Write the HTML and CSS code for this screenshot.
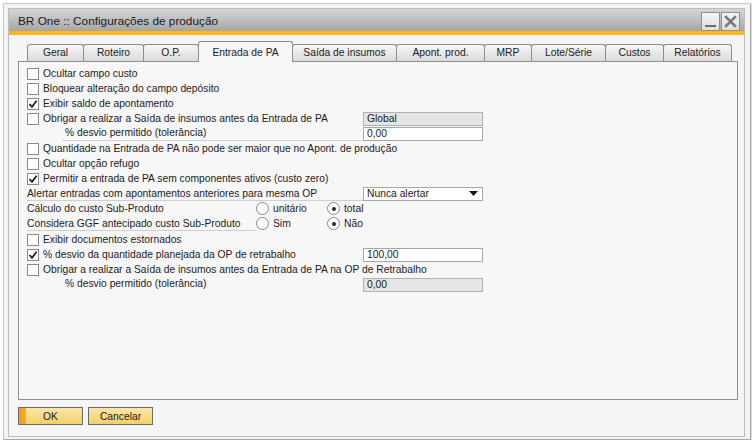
FILE: index.html
```html
<!DOCTYPE html>
<html lang="pt-BR">
<head>
<meta charset="utf-8">
<title>BR One :: Configurações de produção</title>
<link rel="stylesheet" href="styles.css">
</head>
<body>
<div class="window">
  <div class="frame">
    <div class="titlebar">
      <span class="title">BR One :: Configurações de produção</span>
      <div class="wbtns">
        <span class="wbtn"><svg width="17" height="17" viewBox="0 0 17 17"><rect x="3" y="12" width="11" height="2" fill="#6e6e6e"/></svg></span>
        <span class="wbtn"><svg width="17" height="17" viewBox="0 0 17 17"><path d="M4 4 L13 13 M13 4 L4 13" stroke="#7a7a7a" stroke-width="2.6" stroke-linecap="square"/></svg></span>
      </div>
    </div>
    <div class="accent"></div>
    <div class="client">
      <div class="tabs">
        <div class="tab w-geral">Geral</div>
        <div class="tab w-roteiro">Roteiro</div>
        <div class="tab w-op">O.P.</div>
        <div class="tab active w-entrada">Entrada de PA</div>
        <div class="tab w-saida">Saída de insumos</div>
        <div class="tab w-apont">Apont. prod.</div>
        <div class="tab w-mrp">MRP</div>
        <div class="tab w-lote">Lote/Série</div>
        <div class="tab w-custos">Custos</div>
        <div class="tab w-rel">Relatórios</div>
      </div>
      <div class="panel">
        <div class="row"><span class="cb"></span><span class="lbl">Ocultar campo custo</span></div>
        <div class="row"><span class="cb"></span><span class="lbl">Bloquear alteração do campo depósito</span></div>
        <div class="row"><span class="cb checked"><svg width="10" height="10" viewBox="0 0 10 10"><path d="M1.5 5 L4 7.8 L8.6 1.8" fill="none" stroke="#1a1a1a" stroke-width="1.7"/></svg></span><span class="lbl">Exibir saldo de apontamento</span></div>
        <div class="row"><div class="lcol"><span class="cb"></span><span class="lbl">Obrigar a realizar a Saída de insumos antes da Entrada de PA</span></div><span class="field ro">Global</span></div>
        <div class="row"><div class="lcol"><span class="sub">% desvio permitido (tolerância)</span></div><span class="field">0,00</span></div>
        <div class="row"><span class="cb"></span><span class="lbl">Quantidade na Entrada de PA não pode ser maior que no Apont. de produção</span></div>
        <div class="row"><span class="cb"></span><span class="lbl">Ocultar opção refugo</span></div>
        <div class="row"><span class="cb checked"><svg width="10" height="10" viewBox="0 0 10 10"><path d="M1.5 5 L4 7.8 L8.6 1.8" fill="none" stroke="#1a1a1a" stroke-width="1.7"/></svg></span><span class="lbl">Permitir a entrada de PA sem componentes ativos (custo zero)</span></div>
        <div class="row"><div class="lcol uline">Alertar entradas com apontamentos anteriores para mesma OP</div><span class="field select">Nunca alertar<svg class="caret" width="9" height="5" viewBox="0 0 9 5"><path d="M0 0 H9 L4.5 5 Z" fill="#1a1a1a"/></svg></span></div>
        <div class="row"><div class="rlabel">Cálculo do custo Sub-Produto</div><div class="ropt"><span class="rd"></span><span class="rtxt">unitário</span></div><div class="ropt"><span class="rd on"></span><span class="rtxt">total</span></div></div>
        <div class="row"><div class="rlabel uline">Considera GGF antecipado custo Sub-Produto</div><div class="ropt"><span class="rd"></span><span class="rtxt">Sim</span></div><div class="ropt"><span class="rd on"></span><span class="rtxt">Não</span></div></div>
        <div class="row gap1"><span class="cb"></span><span class="lbl">Exibir documentos estornados</span></div>
        <div class="row"><div class="lcol"><span class="cb checked"><svg width="10" height="10" viewBox="0 0 10 10"><path d="M1.5 5 L4 7.8 L8.6 1.8" fill="none" stroke="#1a1a1a" stroke-width="1.7"/></svg></span><span class="lbl">% desvio da quantidade planejada da OP de retrabalho</span></div><span class="field">100,00</span></div>
        <div class="row"><span class="cb"></span><span class="lbl">Obrigar a realizar a Saída de insumos antes da Entrada de PA na OP de Retrabalho</span></div>
        <div class="row"><div class="lcol"><span class="sub plain">% desvio permitido (tolerância)</span></div><span class="field ro">0,00</span></div>
      </div>
      <div class="actions">
        <button class="btn ok" type="button">OK</button>
        <button class="btn" type="button">Cancelar</button>
      </div>
    </div>
  </div>
</div>
</body>
</html>
```
FILE: styles.css
```css
* { box-sizing: border-box; }
body {
  margin: 0;
  background: #ffffff;
  font-family: "Liberation Sans", Arial, sans-serif;
  font-size: 10.3px;
  color: #1c1c1c;
}
.window {
  margin: 3px 0 0 3px;
  width: 748px;
  height: 437px;
  border: 1px solid #c8c8c8;
  border-right-color: #a9a9a9;
  border-bottom-color: #a9a9a9;
  padding: 4px 5px 2px 4px;
  background: #f3f3f3;
  box-shadow: 1px 1px 0 #dddddd;
}
.frame {
  height: 100%;
  border: 1px solid #bdbdbd;
  background: #f5f5f5;
  display: flex;
  flex-direction: column;
}
.titlebar {
  height: 22px;
  background: linear-gradient(#d6d6d6, #a6a6a6);
  display: flex;
  align-items: center;
  justify-content: space-between;
  padding-left: 9px;
  padding-right: 4px;
}
.title {
  font-size: 11.8px;
  color: #1a1a1a;
  padding-top: 1px;
}
.wbtns { display: flex; gap: 1px; align-items: center; padding-top: 2px; }
.wbtn {
  width: 19px;
  height: 19px;
  border: 1px solid #8e8e8e;
  background: linear-gradient(#f4f4f4, #dedede);
  display: flex;
  align-items: center;
  justify-content: center;
}
.accent { height: 4px; background: #f7b81b; }
.client {
  flex: 1;
  padding: 6px 6px 0 9px;
  display: flex;
  flex-direction: column;
}
.tabs {
  display: flex;
  align-items: flex-end;
  height: 20px;
  margin-left: 9px;
}
.tab {
  height: 17px;
  border: 1px solid #8c8c8c;
  border-bottom: none;
  border-radius: 3px 3px 0 0;
  margin-right: -1px;
  background: linear-gradient(#f7f7f7, #dadada);
  text-align: center;
  padding-top: 2px;
  color: #1c1c1c;
}
.tab.active {
  height: 21px;
  margin-bottom: -1px;
  padding-top: 5px;
  background: #f7f7f7;
  position: relative;
  z-index: 1;
}
.w-geral { width: 57px; }
.w-roteiro { width: 61px; }
.w-op { width: 56px; }
.w-entrada { width: 95px; }
.w-saida { width: 105px; }
.w-apont { width: 89px; }
.w-mrp { width: 48px; }
.w-lote { width: 75px; }
.w-custos { width: 59px; }
.w-rel { width: 69px; }
.panel {
  width: 720px;
  height: 339px;
  border: 1px solid #8f8f8f;
  background: #f7f7f7;
  padding: 4px 8px;
}
.row {
  height: 15px;
  display: flex;
  align-items: center;
  white-space: nowrap;
}
.row.gap1 { margin-top: 1px; }
.lcol {
  width: 336px;
  height: 15px;
  display: flex;
  align-items: center;
}
.uline { border-bottom: 1px solid #cfcfcf; }
.cb {
  width: 12px;
  height: 12px;
  border: 1px solid #8a8a8a;
  background: #ffffff;
  margin-right: 4px;
  flex: none;
  display: flex;
  align-items: center;
  justify-content: center;
}
.sub {
  margin-left: 35px;
  padding-left: 3px;
  width: 301px;
  height: 15px;
  line-height: 14px;
  border-bottom: 1px solid #cfcfcf;
}
.sub.plain { border-bottom: none; }
.field {
  width: 120px;
  height: 14px;
  border: 1px solid #a7a7a7;
  background: #ffffff;
  padding-left: 3px;
  line-height: 12px;
  display: flex;
  align-items: center;
  justify-content: space-between;
}
.field.ro {
  background: #e5e5e5;
  border-color: #b0b0b0;
}
.field.select { padding-right: 4px; }
.caret { flex: none; }
.rlabel {
  width: 229px;
  height: 15px;
  display: flex;
  align-items: center;
}
.ropt {
  width: 71px;
  display: flex;
  align-items: center;
}
.rd {
  width: 13px;
  height: 13px;
  border: 1px solid #8a8a8a;
  border-radius: 50%;
  background: #ffffff;
  margin-right: 4px;
  display: flex;
  align-items: center;
  justify-content: center;
}
.rd.on::after {
  content: "";
  width: 4px;
  height: 4px;
  border-radius: 50%;
  background: #2a2a2a;
}
.actions {
  display: flex;
  gap: 5px;
  margin-top: 7px;
}
.btn {
  width: 65px;
  height: 18px;
  border: 1px solid #6a6a6a;
  background: linear-gradient(#fbe7a6, #f2cf6c);
  font-family: "Liberation Sans", Arial, sans-serif;
  font-size: 10.3px;
  color: #1c1c1c;
  padding: 0;
  margin: 0;
}
.btn.ok {
  background: linear-gradient(90deg, #f19a16 0, #f4ad2c 7px, transparent 7px), linear-gradient(#fbe7a6, #f2cf6c);
}
```
